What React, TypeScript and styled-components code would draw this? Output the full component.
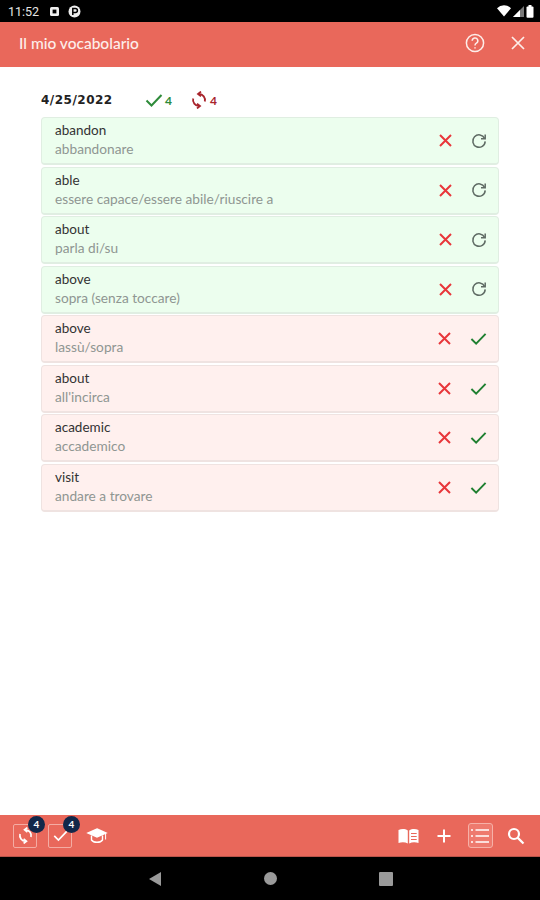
import React from 'react';
import styled, { createGlobalStyle } from 'styled-components';

const GlobalStyle = createGlobalStyle`
  html, body { margin: 0; padding: 0; background: #fff; }
  body { font-family: 'Lato', 'Noto Sans', sans-serif; }
`;

const CORAL = '#e9685b';

interface Word {
  term: string;
  meaning: string;
  known: boolean;
}

const WORDS: Word[] = [
  { term: 'abandon', meaning: 'abbandonare', known: true },
  { term: 'able', meaning: 'essere capace/essere abile/riuscire a', known: true },
  { term: 'about', meaning: 'parla di/su', known: true },
  { term: 'above', meaning: 'sopra (senza toccare)', known: true },
  { term: 'above', meaning: 'lassù/sopra', known: false },
  { term: 'about', meaning: "all'incirca", known: false },
  { term: 'academic', meaning: 'accademico', known: false },
  { term: 'visit', meaning: 'andare a trovare', known: false },
];

const CheckIcon = ({ size = 18, color = '#2e8b3a' }: { size?: number; color?: string }) => (
  <svg width={size} height={size} viewBox="0 0 18 18" fill="none" stroke={color} strokeWidth="2">
    <path d="M1.500 9.500 L6.500 14.500 L16.500 4" />
  </svg>
);

const CrossIcon = () => (
  <svg width="13" height="13" viewBox="0 0 13 13" fill="none" stroke="#e8363a" strokeWidth="2">
    <path d="M1 1 L12 12 M12 1 L1 12" />
  </svg>
);

const RetryIcon = () => (
  <svg width="16" height="16" viewBox="0 0 16 16" fill="none" stroke="#5f6b64" strokeWidth="1.500">
    <path d="M13.600 5.400 A6.200 6.200 0 1 0 14.200 8.400" />
    <path d="M14.200 1.600 V5.800 H10" />
  </svg>
);

const SyncIcon = ({ size = 18, color = '#a8242c' }: { size?: number; color?: string }) => (
  <svg width={size} height={size} viewBox="0 0 18 18" fill="none" stroke={color} strokeWidth="1.800">
    <path d="M9 3 A6 6 0 0 1 14.800 10.500" />
    <path d="M9 15 A6 6 0 0 1 3.200 7.500" />
    <path d="M11 0.600 L8 3 L11 5.400" />
    <path d="M7 12.600 L10 15 L7 17.400" />
  </svg>
);

export default function App() {
  return (
    <Screen>
      <GlobalStyle />
      <StatusBar>
        <StatusGroup>
          <Clock>11:52</Clock>
          <svg width="11" height="11" viewBox="0 0 11 11">
            <rect x="1" y="1" width="9" height="9" rx="1.500" fill="#eee" />
            <rect x="3.600" y="3.600" width="3.800" height="3.800" fill="#000" />
          </svg>
          <svg width="13" height="13" viewBox="0 0 13 13">
            <circle cx="6.500" cy="6.500" r="6" fill="#eee" />
            <path d="M4.800 10 V3.400 H7.400 A2 2 0 0 1 7.400 7.400 H5" fill="none" stroke="#000" strokeWidth="1.500" />
          </svg>
        </StatusGroup>
        <StatusGroup $tight>
          <svg width="14" height="12" viewBox="0 0 14 12">
            <path d="M0 3.200 A10 10 0 0 1 14 3.200 L7 11.500 Z" fill="#fff" />
          </svg>
          <svg width="11" height="11" viewBox="0 0 11 11">
            <path d="M0 11 L11 0 V11 Z" fill="#777" />
            <path d="M0 11 L7 4 V11 Z" fill="#fff" />
          </svg>
          <svg width="8" height="13" viewBox="0 0 8 13">
            <rect x="0.500" y="1.400" width="7" height="11.400" rx="1" fill="#fff" />
            <rect x="2.500" y="0" width="3" height="2" fill="#fff" />
          </svg>
        </StatusGroup>
      </StatusBar>

      <Header>
        <Title>Il mio vocabolario</Title>
        <HeaderActions>
          <svg width="20" height="20" viewBox="0 0 20 20" fill="none" stroke="#fdeeea" strokeWidth="1.500">
            <circle cx="10" cy="10" r="8.600" />
            <path d="M7.200 7.800 A2.800 2.800 0 1 1 11.400 10.200 C10.400 10.800 10 11.300 10 12.600" />
            <path d="M10 14.200 V15.400" />
          </svg>
          <svg width="14" height="14" viewBox="0 0 14 14" fill="none" stroke="#fdeeea" strokeWidth="1.700">
            <path d="M1 1 L13 13 M13 1 L1 13" />
          </svg>
        </HeaderActions>
      </Header>

      <Content>
        <DateRow>
          <DateLabel>4/25/2022</DateLabel>
          <Tally $color="#2e8b3a">
            <CheckIcon />
            4
          </Tally>
          <Tally $color="#a8242c">
            <SyncIcon />
            4
          </Tally>
        </DateRow>
        <WordList>
          {WORDS.map((w, i) => (
            <WordCard key={i} $known={w.known}>
              <WordText>
                <Term>{w.term}</Term>
                <Meaning>{w.meaning}</Meaning>
              </WordText>
              <CardActions>
                <CrossIcon />
                {w.known ? <RetryIcon /> : <CheckIcon size={17} color="#1f7f30" />}
              </CardActions>
            </WordCard>
          ))}
        </WordList>
      </Content>

      <BottomBar>
        <BarGroup>
          <FramedButton>
            <SyncIcon size={17} color="#fff" />
            <Badge>4</Badge>
          </FramedButton>
          <FramedButton>
            <CheckIcon size={15} color="#fff" />
            <Badge>4</Badge>
          </FramedButton>
          <CapSlot>
            <svg width="22" height="18" viewBox="0 0 22 18" fill="none" stroke="#fff" strokeWidth="1.400">
              <path d="M11 2 L20 6 L11 10 L2 6 Z" fill="#fff" />
              <path d="M5.500 8.500 V13 C7.500 16 14.500 16 16.500 13 V8.500" />
              <path d="M19.600 6.500 V12.500" strokeWidth="1" />
            </svg>
          </CapSlot>
        </BarGroup>
        <ToolGrid>
          <svg width="21" height="16" viewBox="0 0 21 16" fill="#fff">
            <path d="M0.500 2 C3.500 0.600 7 0.600 9.800 2.400 V15.400 C7 13.800 3.500 13.800 0.500 15 Z" />
            <path d="M11.200 2.400 C14 0.600 17.500 0.600 20.500 2 V15 C17.500 13.800 14 13.800 11.200 15.400 Z" />
            <path d="M13 5.500 H18.700 M13 8.500 H18.700 M13 11.500 H18.700" stroke={CORAL} strokeWidth="1" />
          </svg>
          <svg width="14" height="14" viewBox="0 0 14 14" fill="none" stroke="#fff" strokeWidth="2">
            <path d="M7 0.500 V13.500 M0.500 7 H13.500" />
          </svg>
          <ListButton>
            <svg width="18" height="16" viewBox="0 0 18 16" fill="none" stroke="#fff" strokeWidth="1.500">
              <path d="M4.500 2 H18 M4.500 8 H18 M4.500 14 H18 M0 2 H2 M0 8 H2 M0 14 H2" />
            </svg>
          </ListButton>
          <svg width="18" height="18" viewBox="0 0 18 18" fill="none" stroke="#fff" strokeWidth="2.200">
            <circle cx="7" cy="7" r="5" />
            <path d="M10.600 10.600 L16.500 16.500" />
          </svg>
        </ToolGrid>
      </BottomBar>

      <NavBar>
        <svg width="14" height="16" viewBox="0 0 14 16"><path d="M13 1 V15 L1 8 Z" fill="#9a9a9a" /></svg>
        <svg width="13" height="13" viewBox="0 0 13 13"><circle cx="6.500" cy="6.500" r="6.500" fill="#9a9a9a" /></svg>
        <svg width="14" height="14" viewBox="0 0 14 14"><rect width="14" height="14" rx="1" fill="#9a9a9a" /></svg>
      </NavBar>
    </Screen>
  );
}

const Screen = styled.div`
  width: 540px;
  height: 900px;
  display: flex;
  flex-direction: column;
  overflow: hidden;
  background: #fff;
`;

const StatusBar = styled.div`
  height: 22px;
  background: #000;
  display: flex;
  align-items: center;
  justify-content: space-between;
  padding: 0 6px 0 8px;
  flex: none;
`;

const StatusGroup = styled.div<{ $tight?: boolean }>`
  display: flex;
  align-items: center;
  gap: ${({ $tight }) => ($tight ? '2px' : '8px')};
`;

const Clock = styled.span`
  color: #e4e4e4;
  font-family: 'Roboto', sans-serif;
  font-size: 12.500px;
  margin-right: 2px;
`;

const Header = styled.div`
  height: 45px;
  box-sizing: border-box;
  background: ${CORAL};
  display: flex;
  align-items: center;
  justify-content: space-between;
  padding: 0 15px 3px 19px;
  flex: none;
`;

const Title = styled.h1`
  margin: 0;
  color: #fdeeea;
  font-size: 15.500px;
  font-weight: 500;
`;

const HeaderActions = styled.div`
  display: flex;
  align-items: center;
  gap: 26px;
`;

const Content = styled.div`
  flex: 1;
  padding: 20px 41px 0;
`;

const DateRow = styled.div`
  height: 26px;
  margin-bottom: 4px;
  display: flex;
  align-items: center;
`;

const DateLabel = styled.span`
  width: 104px;
  font-family: 'DejaVu Sans', sans-serif;
  font-size: 12px;
  letter-spacing: 0.500px;
  font-weight: 700;
  color: #222;
`;

const Tally = styled.span<{ $color: string }>`
  display: flex;
  align-items: center;
  gap: 2px;
  width: 45px;
  font-size: 12px;
  font-weight: 700;
  color: ${({ $color }) => $color};
`;

const WordList = styled.div`
  display: flex;
  flex-direction: column;
  gap: 1.500px;
`;

const WordCard = styled.div<{ $known: boolean }>`
  height: 48px;
  box-sizing: border-box;
  border: 1px solid ${({ $known }) => ($known ? '#e0eee2' : '#efe3e1')};
  border-bottom-width: 2px;
  border-radius: 4px;
  background: ${({ $known }) => ($known ? '#ecfeee' : '#fff0ee')};
  display: flex;
  align-items: center;
  justify-content: space-between;
  padding: 0 11px 0 13px;
`;

const WordText = styled.div`
  display: flex;
  flex-direction: column;
  gap: 3px;
  margin-bottom: 2px;
`;

const Term = styled.span`
  font-size: 13.500px;
  line-height: 16px;
  color: #333;
`;

const Meaning = styled.span`
  font-size: 13.700px;
  line-height: 16px;
  color: #8f9692;
`;

const CardActions = styled.div`
  display: flex;
  align-items: center;
  gap: 19px;
`;

const BottomBar = styled.div`
  height: 42px;
  background: ${CORAL};
  border-bottom: 1px solid #b9544a;
  box-sizing: border-box;
  display: flex;
  align-items: center;
  justify-content: space-between;
  padding: 0 6px 0 13px;
  flex: none;
`;

const BarGroup = styled.div`
  display: flex;
  align-items: center;
  gap: 11px;
`;

const CapSlot = styled.div`
  margin-left: 3px;
  display: flex;
`;

const ToolGrid = styled.div`
  display: grid;
  grid-template-columns: repeat(4, 36px);
  align-items: center;
  justify-items: center;
`;

const FramedButton = styled.div`
  position: relative;
  width: 24px;
  height: 24px;
  box-sizing: border-box;
  border: 1px solid #f4aca3;
  border-radius: 2px;
  display: flex;
  align-items: center;
  justify-content: center;
`;

const Badge = styled.span`
  position: absolute;
  top: -9px;
  right: -9px;
  width: 17px;
  height: 17px;
  border-radius: 50%;
  background: #12284a;
  color: #fff;
  font-size: 10px;
  font-weight: 700;
  display: flex;
  align-items: center;
  justify-content: center;
`;

const ListButton = styled.div`
  width: 25px;
  height: 25px;
  box-sizing: border-box;
  border: 1px solid #f6b1a8;
  border-radius: 3px;
  background: #ee7a6e;
  display: flex;
  align-items: center;
  justify-content: center;
`;

const NavBar = styled.div`
  height: 43px;
  background: #000;
  display: flex;
  align-items: center;
  justify-content: center;
  gap: 102px;
  flex: none;
`;
